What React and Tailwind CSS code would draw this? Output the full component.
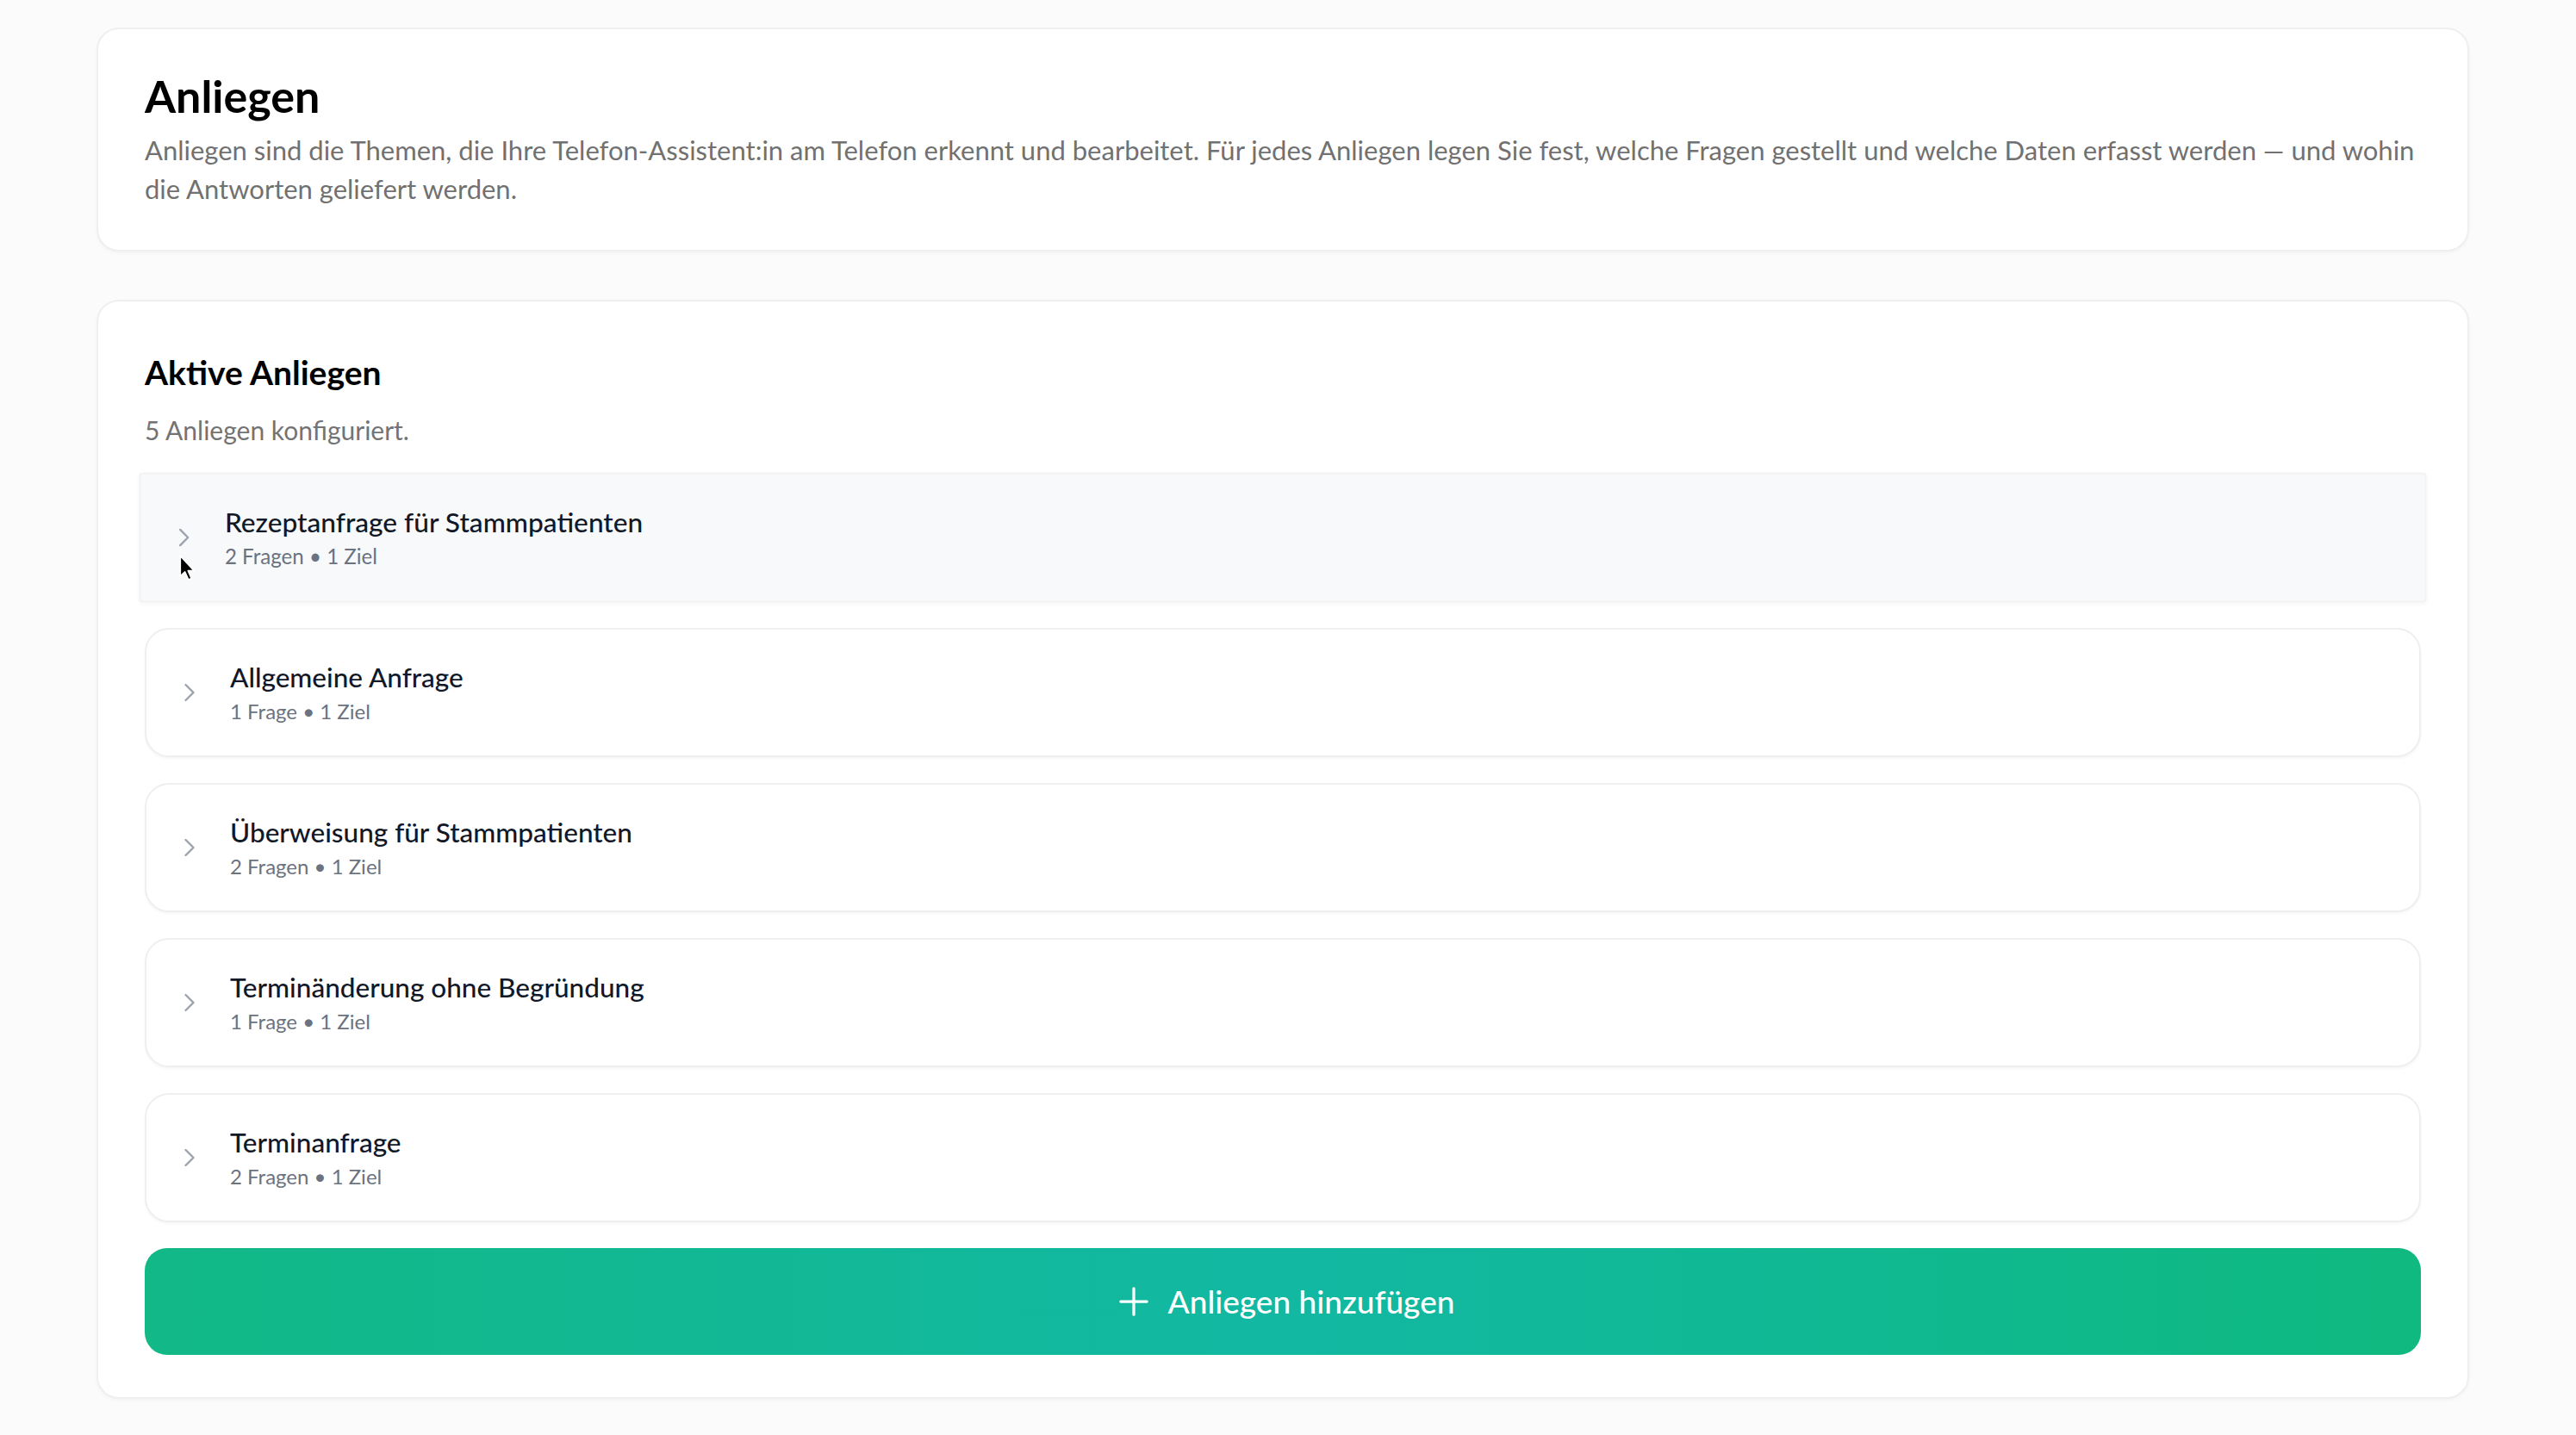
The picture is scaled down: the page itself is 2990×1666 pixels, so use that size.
import { ChevronRight, Plus } from 'lucide-react';

const ANLIEGEN = [
  { id: 'rezept', title: 'Rezeptanfrage für Stammpatienten', fragen: 2, ziele: 1, hover: true },
  { id: 'allgemein', title: 'Allgemeine Anfrage', fragen: 1, ziele: 1 },
  { id: 'ueberweisung', title: 'Überweisung für Stammpatienten', fragen: 2, ziele: 1 },
  { id: 'terminaenderung', title: 'Terminänderung ohne Begründung', fragen: 1, ziele: 1 },
  { id: 'termin', title: 'Terminanfrage', fragen: 2, ziele: 1 },
];

const countLabel = (n, one, many) => `${n} ${n === 1 ? one : many}`;

function Cursor() {
  return (
    <svg
      className="absolute left-[44px] top-[93px] pointer-events-none"
      width="22"
      height="32"
      viewBox="0 0 16 24"
    >
      <path d="M1 1 L1 18.5 L5 14.8 L8 21.5 L10.6 20.4 L7.7 13.8 L13 13.8 Z" fill="#000" stroke="#fff" strokeWidth="1.2" strokeLinejoin="round" />
    </svg>
  );
}

function AnliegenRow({ item }) {
  return (
    <div
      className={`relative flex h-[150px] items-center gap-[29px] border-2 pl-[32px] ${
        item.hover
          ? 'scale-[1.005] rounded-[4px] border-[#f3f3f3] bg-[#f8f9fb] shadow-[0_2px_4px_rgba(0,0,0,0.03)]'
          : 'rounded-[28px] border-[#efefef] bg-white shadow-[0_2px_3px_rgba(0,0,0,0.04)]'
      }`}
    >
      <ChevronRight size={36} strokeWidth={1.6} className="shrink-0 text-[#9ca3af]" />
      <div className="min-w-0">
        <p className="truncate text-[31.5px] font-medium leading-[40px] text-[#111827]">{item.title}</p>
        <p className="mt-1 text-[24px] leading-[32px] text-[#6b7280]">
          {countLabel(item.fragen, 'Frage', 'Fragen')} • {countLabel(item.ziele, 'Ziel', 'Ziele')}
        </p>
      </div>
      {item.hover && <Cursor />}
    </div>
  );
}

export default function App() {
  return (
    <div className="min-h-screen bg-[#fbfbfb] pb-10 pl-[112px] pr-[124px] pt-[32px] font-[Lato,'Noto_Sans',sans-serif]">
      {/* Intro */}
      <section className="rounded-[26px] border-2 border-[#efefef] bg-white px-[54px] pb-[48px] pt-[46px] shadow-[0_2px_4px_rgba(0,0,0,0.03)]">
        <h1 className="text-[52px] font-bold leading-[62px] text-black">Anliegen</h1>
        <p className="mt-[10px] text-[31px] leading-[45px] text-[#717171]">
          Anliegen sind die Themen, die Ihre Telefon-Assistent:in am Telefon erkennt und bearbeitet. Für jedes Anliegen
          legen Sie fest, welche Fragen gestellt und welche Daten erfasst werden — und wohin die Antworten geliefert
          werden.
        </p>
      </section>

      {/* Active list */}
      <section className="mt-[56px] rounded-[26px] border-2 border-[#efefef] bg-white px-[54px] pb-[49px] pt-[57px] shadow-[0_2px_4px_rgba(0,0,0,0.03)]">
        <h2 className="text-[39px] font-bold leading-[50px] text-black">Aktive Anliegen</h2>
        <p className="mt-[20px] text-[30px] leading-[45px] text-[#737373]">
          {ANLIEGEN.length} Anliegen konfiguriert.
        </p>

        <div className="mt-[27px] flex flex-col gap-[30px]">
          {ANLIEGEN.map((item) => (
            <AnliegenRow key={item.id} item={item} />
          ))}
          <button
            type="button"
            className="flex h-[124px] w-full items-center justify-center gap-[14px] rounded-[26px] bg-linear-to-r from-[#12b886] via-[#12b8a2] to-[#0fb97f] text-[37px] font-medium text-white"
          >
            <Plus size={52} strokeWidth={1.5} />
            Anliegen hinzufügen
          </button>
        </div>
      </section>
    </div>
  );
}
